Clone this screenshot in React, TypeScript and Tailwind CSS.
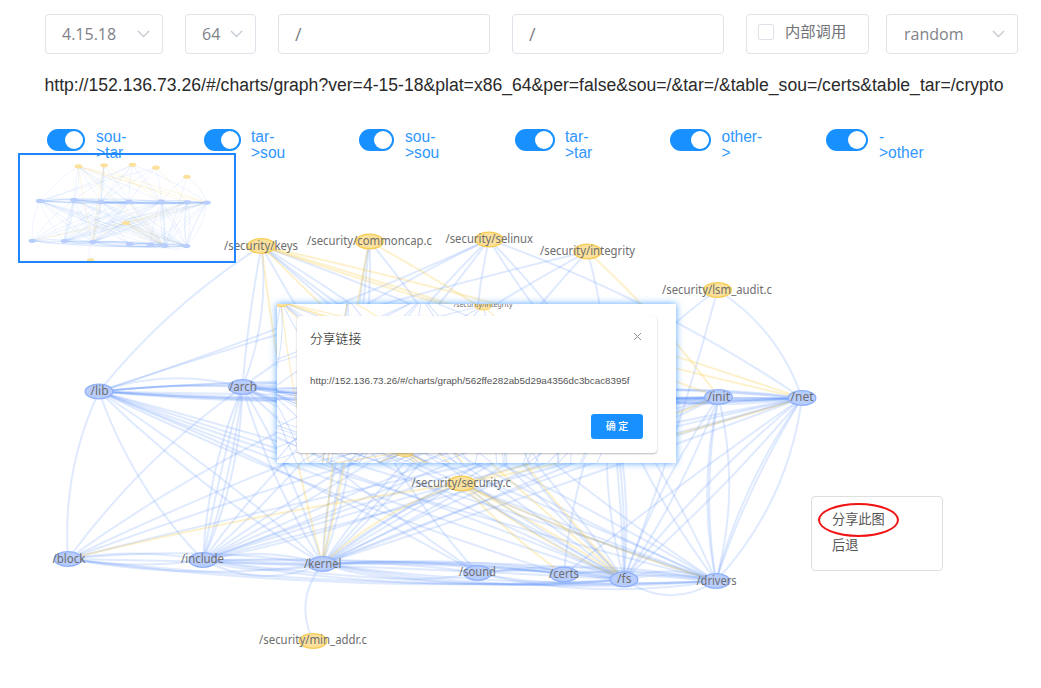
import React from "react";

type GraphNode = { x: number; y: number; label?: string; w?: number; lx?: number; ly?: number; gold?: boolean };

const NODES: Record<string, GraphNode> = {
  keys: { x: 261.5, y: 246, label: "/security/keys", lx: 224, ly: 249.5, w: 74, gold: true },
  cap: { x: 369.5, y: 241.5, label: "/security/commoncap.c", lx: 307, ly: 244.5, w: 125, gold: true },
  selinux: { x: 489, y: 239.5, label: "/security/selinux", lx: 445.5, ly: 242.5, w: 87.5, gold: true },
  integrity: { x: 587.5, y: 251.5, label: "/security/integrity", lx: 540, ly: 254.5, w: 95, gold: true },
  lsm: { x: 717.5, y: 290, label: "/security/lsm_audit.c", lx: 662, ly: 293.5, w: 110, gold: true },
  lib: { x: 99, y: 391.5, label: "/lib", lx: 90.5, ly: 394.5, w: 18 },
  arch: { x: 242.5, y: 387, label: "/arch", lx: 229, ly: 390.5, w: 28 },
  mm: { x: 356, y: 396 },
  ipc: { x: 474, y: 395 },
  virt: { x: 610, y: 394 },
  init: { x: 718.5, y: 397, label: "/init", lx: 707.5, ly: 400.5, w: 22.5 },
  net: { x: 802, y: 398, label: "/net", lx: 790.5, ly: 401, w: 23 },
  sec: { x: 461.5, y: 483.5, label: "/security/security.c", lx: 411.5, ly: 486.5, w: 99.5, gold: true },
  block: { x: 68, y: 559, label: "/block", lx: 52.5, ly: 562.5, w: 33 },
  include: { x: 203, y: 560, label: "/include", lx: 181, ly: 563, w: 43 },
  kernel: { x: 322.5, y: 564, label: "/kernel", lx: 304, ly: 568, w: 37.5 },
  sound: { x: 477.5, y: 573, label: "/sound", lx: 459, ly: 576, w: 37 },
  certs: { x: 564, y: 574.5, label: "/certs", lx: 549, ly: 578, w: 30 },
  fs: { x: 624, y: 579.5, label: "/fs", lx: 617, ly: 582.5, w: 14.5 },
  drivers: { x: 716, y: 581, label: "/drivers", lx: 696.5, ly: 584.5, w: 40 },
  addr: { x: 313, y: 641, label: "/security/min_addr.c", lx: 259, ly: 644, w: 108, gold: true },
};

/* "from to bend": a positive bend bows to the right-hand side of the travel direction */
const BLUE = `
keys lib 9;keys arch 2;keys arch -9;keys mm 3;keys ipc -4;keys ipc 4;keys virt -5;keys fs -5
cap mm 5;cap mm 1;cap mm -5;cap ipc -5
selinux lib -6;selinux arch 7;selinux mm 5;selinux mm -4;selinux ipc 5;selinux virt 6;selinux virt -6;selinux net -11
integrity lib 6;integrity mm 4;integrity ipc 4;integrity virt -4
lsm virt 6;lsm fs -4;lsm net -12
lib arch -3;lib arch -11;lib mm -8;lib mm 4;lib ipc -10;lib ipc 8;lib virt 9;lib virt -12;lib init 6;lib net 9;lib net 2
arch mm 3;arch mm -8;arch ipc 4;arch ipc 9;arch virt 8;arch virt -6;arch init 8;arch net 9;arch net 3
mm ipc 0;mm ipc 8;mm virt 8;mm net -9;mm net 8;mm init 4;ipc net -8;ipc net 7;ipc init 7;virt net -6;virt net 4;virt init 5;virt net 8;mm net 2
lib block 11;lib include 11;lib kernel 8;lib kernel -6;lib sound -7;lib certs 9;lib fs 5;lib fs -7;lib drivers 8;lib drivers -6
arch block 10;arch include 8;arch include 2;arch include -5;arch include -9;arch kernel 7;arch kernel -6;arch sound 6;arch fs 6;arch fs -6;arch drivers 6;arch drivers -5
mm block 9;mm include 7;mm include -6;mm kernel 7;mm kernel 0;mm kernel -7;mm sound 7;mm fs 7;mm fs -4;mm drivers 6;mm drivers -6
ipc block 7;ipc include 5;ipc include -4;ipc kernel 7;ipc kernel 0;ipc kernel -6;ipc fs 6;ipc fs -5;ipc drivers 6
virt block 8;virt include 5;virt include -4;virt kernel 6;virt kernel 0;virt kernel -8;virt certs 8;virt fs 9;virt fs -2;virt fs -8;virt fs -5;virt drivers 7;virt drivers -6
init include 6;init kernel 7;init kernel -5;init fs 7;init fs -6;init drivers 10;init drivers 8;init drivers -12
net block 6;net include 8;net include -2;net kernel 7;net kernel -3;net certs 2;net fs 7;net fs -5;net drivers 9;net drivers -16;net drivers 6
sec kernel 6;sec fs 5;sec drivers 5;sec include -7
block include -6;block include 5;block kernel -8;block kernel 10;block fs 13;block drivers 12;block fs -3
include kernel 0;include kernel 8;include kernel -8;include kernel 14;include fs 13;include drivers 12;include fs -7;include drivers -6;include kernel 2
kernel sound 10;kernel sound -4;kernel certs -6;kernel fs -9;kernel fs -5;kernel fs 12;kernel drivers 12;kernel drivers 9;kernel drivers -8
sound fs 6;sound fs -6;sound drivers -10;sound certs -3;certs fs -4;certs drivers -6;fs drivers 15;fs drivers -5;fs drivers -9;sound drivers 12
kernel addr 12`;

const GOLD = `
keys kernel 6;keys fs 5;keys init -4;keys net -8;keys net 8
cap kernel 5;cap virt -4;integrity init -5;mm kernel -2
block sec -5;sec kernel 9;sec fs 6;sec fs -3;sec drivers 5;sec certs 4;sec net 5;sec init 4
ipc fs 4`;

/* The share dialog's backdrop only exposes the rim of the graph, where this label appears */
const RIM_LABELS = ["integrity"];

function toPaths(list: string): string[] {
  return list
    .trim()
    .split(/[;\n]/)
    .map((entry) => {
      const [from, to, bend] = entry.trim().split(" ");
      const a = NODES[from];
      const b = NODES[to];
      const dx = b.x - a.x;
      const dy = b.y - a.y;
      const len = Math.hypot(dx, dy);
      const k = (2 * Number(bend)) / len;
      const cx = (a.x + b.x) / 2 - dy * k;
      const cy = (a.y + b.y) / 2 + dx * k;
      return `M${a.x} ${a.y}Q${cx.toFixed(1)} ${cy.toFixed(1)} ${b.x} ${b.y}`;
    });
}

const BLUE_PATHS = toPaths(BLUE);
const GOLD_PATHS = toPaths(GOLD);

type GraphProps = { labels?: string[]; edgeOpacity?: number; strokeWidth?: number; rx?: number; ry?: number; outlined?: boolean };

function Graph({ labels = Object.keys(NODES), edgeOpacity = 0.19, strokeWidth = 2, rx = 13.8, ry = 7.3, outlined = true }: GraphProps) {
  const nodes = Object.entries(NODES);
  return (
    <g>
      <g fill="none" stroke="#5b8ff9" strokeOpacity={edgeOpacity} strokeWidth={strokeWidth}>
        {BLUE_PATHS.map((d, i) => (
          <path key={i} d={d} />
        ))}
      </g>
      <g fill="none" stroke="#f6bd16" strokeOpacity={edgeOpacity * 1.15} strokeWidth={strokeWidth}>
        {GOLD_PATHS.map((d, i) => (
          <path key={i} d={d} />
        ))}
      </g>
      {nodes.map(([id, n]) => (
        <ellipse
          key={id}
          cx={n.x}
          cy={n.y}
          rx={rx}
          ry={ry}
          fill={n.gold ? "#fbe19b" : "#b9cdfc"}
          stroke={outlined ? (n.gold ? "#f6cc53" : "#8fb0fa") : "none"}
          strokeWidth={1.3}
        />
      ))}
      <g fill="#6e6e6e" fontSize={11.7} className="font-['Noto_Sans','Open_Sans',sans-serif]">
        {nodes.map(([id, n]) =>
          n.label && labels.includes(id) ? (
            <text key={id} x={n.lx} y={n.ly} textLength={n.w} lengthAdjust="spacingAndGlyphs">
              {n.label}
            </text>
          ) : null,
        )}
      </g>
    </g>
  );
}

function Select({ value, className }: { value: string; className: string }) {
  return (
    <div className={`flex h-10 items-center justify-between rounded border border-[#e0e1e9] bg-white text-[16px] text-[#808288] ${className}`}>
      <span>{value}</span>
      <svg className="h-[8px] w-[13px]" viewBox="0 0 13 8" fill="none" stroke="#c6cad3" strokeWidth="1.4">
        <path d="M1 1L6.5 6.5L12 1" />
      </svg>
    </div>
  );
}

const SWITCHES = [
  { label: ["sou-", ">tar"], cell: "w-[156.5px]", track: "w-[38px]", gap: "ml-[11px]" },
  { label: ["tar-", ">sou"], cell: "w-[155.5px]", track: "w-[37px]", gap: "ml-[10.5px]" },
  { label: ["sou-", ">sou"], cell: "w-[156px]", track: "w-[35px]", gap: "ml-[11px]" },
  { label: ["tar-", ">tar"], cell: "w-[155px]", track: "w-[40px]", gap: "ml-[10px]" },
  { label: ["other-", ">"], cell: "w-[156px]", track: "w-[41px]", gap: "ml-[10.5px]" },
  { label: ["-", ">other"], cell: "w-[120px]", track: "w-[42px]", gap: "ml-[11px]" },
];

function ShareDialog() {
  return (
    <div className="absolute left-[277px] top-[304px] h-[159px] w-[399px] bg-white shadow-[0_0_7px_0_rgba(24,134,255,0.75)]">
      <svg className="absolute inset-0 h-full w-full overflow-hidden" viewBox="0 0 399 159">
        <g transform="translate(4 -2) scale(.62 .632) translate(-261.5 -246)">
          <Graph strokeWidth={1.8} edgeOpacity={0.24} labels={RIM_LABELS} />
        </g>
      </svg>
      <div className="relative ml-5 mt-3 flex h-[137px] w-[360px] flex-col rounded-sm bg-white pl-[13px] pr-[14px] shadow-[0_1px_2px_rgba(0,0,0,0.28)]">
        <div className="mt-[12px] flex h-[19px] items-center justify-between">
          <h2 className="text-[12.8px] font-light leading-[18px] text-black">分享链接</h2>
          <svg className="-mt-0.5 mr-[1px] h-[9px] w-[9px]" viewBox="0 0 9 9" stroke="#929292" strokeWidth="1">
            <path d="M1 1L8 8M8 1L1 8" />
          </svg>
        </div>
        <p className="mt-[27px] whitespace-nowrap font-['Liberation_Sans',Arial,sans-serif] text-[9.8px] leading-[14px] text-[#555]">
          http://152.136.73.26/#/charts/graph/562ffe282ab5d29a4356dc3bcac8395f
        </p>
        <button className="mt-[26px] h-[25px] w-[52px] self-end rounded-[3px] bg-[#1890ff] text-[10px] font-medium leading-[25px] text-white">
          确 定
        </button>
      </div>
    </div>
  );
}

export default function App() {
  return (
    <main className="relative h-[688px] w-[1041px] overflow-hidden bg-white font-['Open_Sans','Noto_Sans_CJK_SC',sans-serif]">
      <svg className="absolute inset-0 h-full w-full" viewBox="0 0 1041 688">
        <Graph />
      </svg>

      <div className="relative flex pl-[45px] pt-[14px]">
        <Select value="4.15.18" className="w-[118px] pl-4 pr-[12px]" />
        <Select value="64" className="ml-[22px] w-[71px] pl-4 pr-[12px]" />
        <div className="ml-[22px] flex h-10 w-[212px] items-center rounded border border-[#e0e1e9] bg-white pl-4 text-[18px] text-[#808288]">/</div>
        <div className="ml-[22px] flex h-10 w-[212px] items-center rounded border border-[#e0e1e9] bg-white pl-4 text-[18px] text-[#808288]">/</div>
        <div className="ml-[22px] flex h-10 w-[123px] items-center rounded border border-[#e0e1e9] bg-white pb-1 pl-[11px]">
          <span className="h-4 w-4 rounded-[2px] border border-[#dfe1e8]" />
          <span className="-mt-0.5 ml-[11px] text-[15.3px] text-[#707276]">内部调用</span>
        </div>
        <Select value="random" className="ml-[17px] w-[132px] pl-[17px] pr-[12px]" />
      </div>

      <p className="relative ml-[44.5px] mt-[20px] whitespace-nowrap font-['Liberation_Sans',Arial,sans-serif] text-[17.6px] leading-[22px] text-[#2a2a2a]">
        http://152.136.73.26/#/charts/graph?ver=4-15-18&amp;plat=x86_64&amp;per=false&amp;sou=/&amp;tar=/&amp;table_sou=/certs&amp;table_tar=/crypto
      </p>

      <div className="relative mt-[33px] flex pl-[47px] font-['Liberation_Sans',Arial,sans-serif] text-[15.6px] leading-[15.5px] text-[#2f97ff]">
        {SWITCHES.map((s) => (
          <div key={s.label.join("")} className={`flex shrink-0 items-start ${s.cell}`}>
            <span className={`flex h-[22px] shrink-0 items-center justify-end rounded-full bg-[#1890ff] pr-[2px] ${s.track}`}>
              <span className="h-[18px] w-[18px] rounded-full bg-white" />
            </span>
            <span className={s.gap}>
              {s.label[0]}
              <br />
              {s.label[1]}
            </span>
          </div>
        ))}
      </div>

      <div className="absolute left-[18px] top-[153px] h-[110px] w-[218px] overflow-hidden border-2 border-[#1f86ff]">
        <svg className="h-full w-full" viewBox="20 155 214 106">
          <g transform="translate(39.7 201) scale(.238) translate(-99 -391.5)">
            <Graph labels={[]} outlined={false} edgeOpacity={0.11} strokeWidth={4} rx={16} ry={9} />
          </g>
        </svg>
      </div>

      <ShareDialog />

      <div className="absolute left-[811px] top-[496px] h-[75px] w-[132px] rounded border border-[#dedede] bg-white pl-5 pt-[10px] text-[13.2px] leading-[25.5px] text-[#555]">
        <div>分享此图</div>
        <div>后退</div>
        <span className="absolute left-[6px] top-[6px] h-[34px] w-[81px] rounded-[50%] border-2 border-[#f01414]" />
      </div>
    </main>
  );
}
